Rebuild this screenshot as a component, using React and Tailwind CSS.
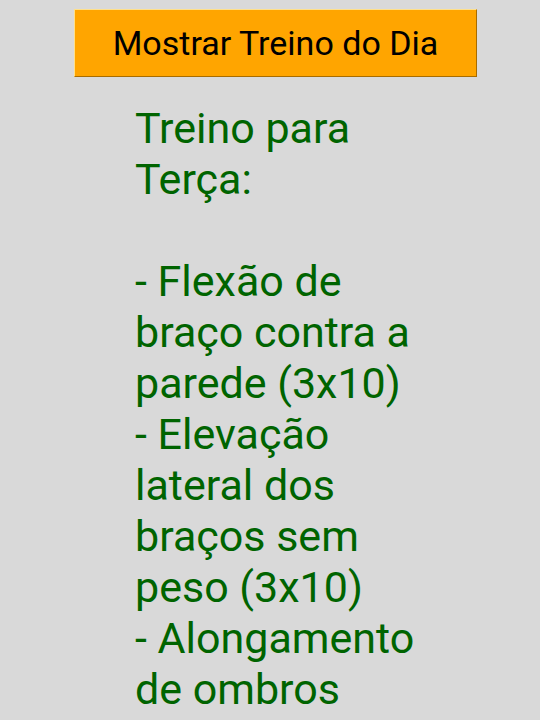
import React from 'react'

const treino = `Treino para Terça:

- Flexão de braço contra a parede (3x10)
- Elevação lateral dos braços sem peso (3x10)
- Alongamento de ombros`

export default function App() {
  return (
    <div className="min-h-[720px] bg-[#d9d9d9] font-['Roboto',sans-serif] flex flex-col pt-[9px]">
      <button className="ml-[74px] w-[403px] h-[68px] bg-[#ffa500] text-black text-[34px] leading-none border border-t-[#ffe08a] border-l-[#ffe08a] border-b-[#a86c00] border-r-[#a86c00]">
        Mostrar Treino do Dia
      </button>
      <p className="ml-[135px] mt-[26px] w-[290px] whitespace-pre-line text-[#006400] text-[43px] leading-[51px]">
        {treino}
      </p>
    </div>
  )
}
